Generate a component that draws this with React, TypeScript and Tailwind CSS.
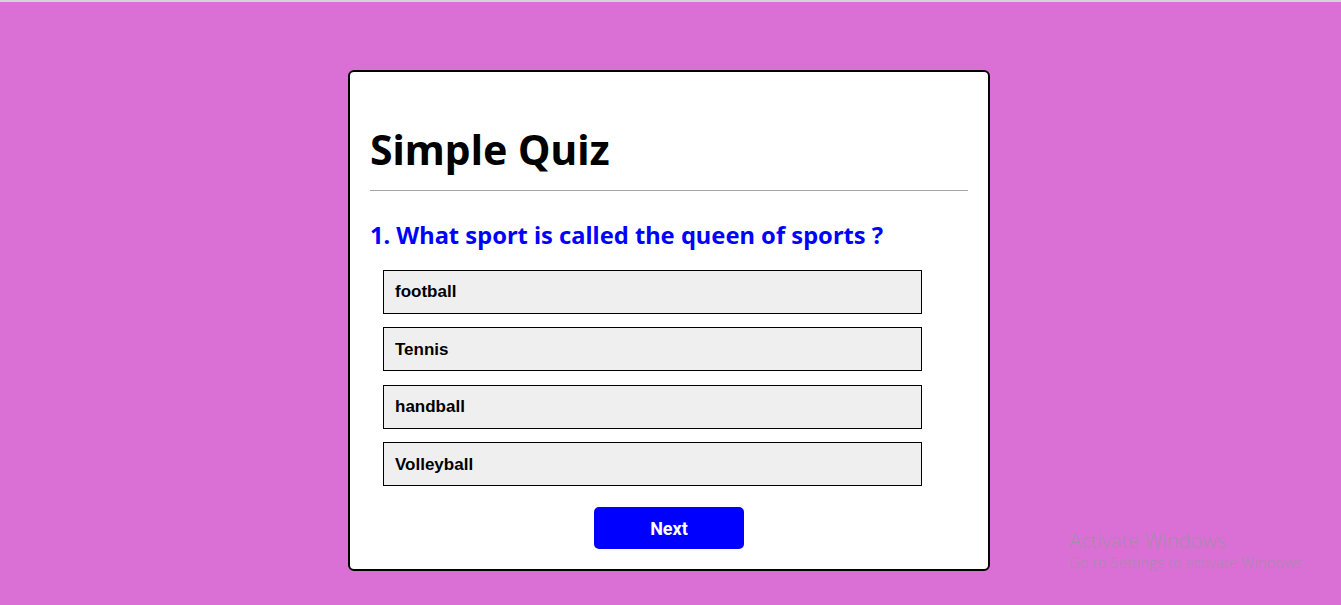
const answers = ["football", "Tennis", "handball", "Volleyball"];

const App = () => {
  return (
    <div className="relative min-h-[605px] bg-[#da70d6] border-t-2 border-[#d4d4d4]">
      <div className="pt-[68px] pr-[3px] flex justify-center">
        <div className="w-[642px] h-[501px] bg-white border-2 border-black rounded-[6px] px-[20px] pt-[57px]">
          <h1 className="font-['Noto_Sans',sans-serif] font-bold text-[41px] leading-none text-black pb-[20px] border-b border-[#a5a5a5]">
            Simple Quiz
          </h1>
          <h2 className="mt-[33px] font-['Noto_Sans',sans-serif] font-bold text-[23.7px] leading-none text-[#0000ff]">
            1. What sport is called the queen of sports ?
          </h2>
          <div className="mt-[22px] ml-[13px] w-[539px] flex flex-col gap-[13.5px]">
            {answers.map((a) => (
              <button
                key={a}
                className="h-[44px] bg-[#efefef] border border-black text-left pl-[11px] pt-[1px] font-['Liberation_Sans',Arial,sans-serif] font-bold text-[17px] text-black"
              >
                {a}
              </button>
            ))}
          </div>
          <div className="flex justify-center mt-[21px]">
            <button className="w-[150px] h-[42px] bg-[#0000ff] rounded-[5px] text-white font-['Roboto',sans-serif] font-bold text-[18px]">
              Next
            </button>
          </div>
        </div>
      </div>
      <div className="absolute left-[1069px] top-[526px] font-['Open_Sans',sans-serif] text-[#a98aaa] leading-tight">
        <p className="text-[20px] font-light">Activate Windows</p>
        <p className="text-[15px] font-light">Go to Settings to activate Windows.</p>
      </div>
    </div>
  );
};

export default App;
